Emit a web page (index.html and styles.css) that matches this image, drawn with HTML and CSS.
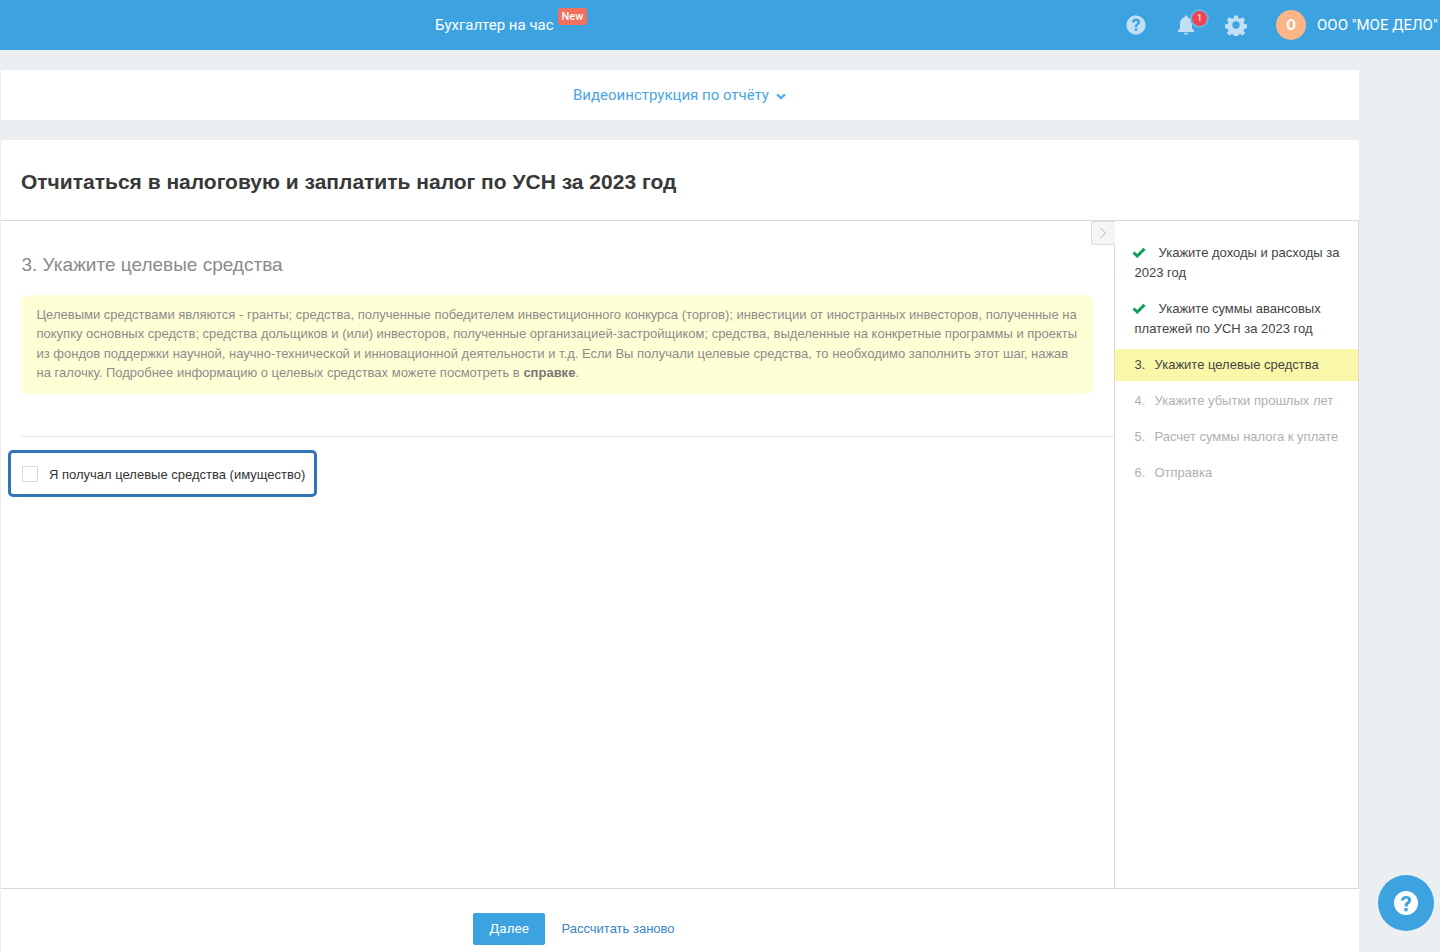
FILE: index.html
```html
<!DOCTYPE html>
<html lang="ru">
<head>
<meta charset="utf-8">
<title>Отчёт по УСН</title>
<link rel="stylesheet" href="styles.css">
</head>
<body>
<header class="topbar">
  <div class="promo">
    <span class="promo-text">Бухгалтер на час</span>
    <span class="promo-badge">New</span>
  </div>
  <div class="top-actions">
    <svg class="top-icon help-icon" viewBox="0 0 24 24"><path fill="#c1e0f6" fill-rule="evenodd" d="M12 1.500a10.500 10.500 0 1 0 0 21 10.500 10.500 0 0 0 0-21zM13.400 18.400h-2.800v-2.700h2.800zM15.900 10.600c-.4.6-1 1.100-1.500 1.500-.7.5-1 .9-1 2v.4h-2.700v-.7c0-1.500.5-2.400 1.500-3.100.9-.6 1.500-1.100 1.500-1.900 0-.8-.7-1.300-1.600-1.300-1 0-1.700.6-1.800 1.700H7.600C7.700 6.500 9.500 5 12.100 5c2.600 0 4.400 1.400 4.400 3.500 0 .8-.2 1.500-.6 2.100z"/></svg>
    <div class="bell">
      <svg class="top-icon" viewBox="0 0 24 24"><path fill="#c1e0f6" d="M12 1.500c-.9 0-1.500.7-1.500 1.500v.6C7.300 4.400 5.500 7.200 5.500 10.500v5L3 18.500V19.500h18V18.500l-2.500-3v-5c0-3.300-1.800-6.100-5-6.900V3c0-.8-.6-1.500-1.500-1.500zM9.800 20.500a2.200 2.200 0 0 0 4.400 0z"/></svg>
      <span class="bell-count">1</span>
    </div>
    <svg class="top-icon gear-icon" viewBox="0 0 24 24"><path fill="#c1e0f6" fill-rule="evenodd" d="M10 1.500h4l.6 3 1.900.8 2.600-1.700 2.800 2.800-1.700 2.600.8 1.900 3 .6v4l-3 .6-.8 1.900 1.700 2.600-2.800 2.800-2.600-1.700-1.900.8-.6 3h-4l-.6-3-1.900-.8-2.600 1.700-2.800-2.800 1.700-2.600-.8-1.900-3-.6v-4l3-.6.8-1.900-1.700-2.600 2.800-2.800 2.600 1.700 1.900-.8zM12 8a4 4 0 1 0 0 8 4 4 0 0 0 0-8z"/></svg>
    <div class="account">
      <span class="avatar">О</span>
      <span class="company">ООО "МОЕ ДЕЛО"</span>
    </div>
  </div>
</header>

<main class="page">
  <section class="video-card">
    <a class="video-link">Видеоинструкция по отчёту</a>
    <svg class="video-chevron" viewBox="0 0 10 7"><path d="M1 1.300l4 3.700 4-3.700" fill="none" stroke="#5eb3e4" stroke-width="2.500"/></svg>
  </section>

  <section class="report-card">
    <h1 class="report-title">Отчитаться в налоговую и заплатить налог по УСН за 2023 год</h1>
    <div class="report-body">
      <div class="step-content">
        <button class="collapse-toggle" type="button">
          <svg viewBox="0 0 8 12"><path d="M1.500 1l5 5-5 5" fill="none" stroke="#b4b4b4" stroke-width="1"/></svg>
        </button>
        <h2 class="step-title">3. Укажите целевые средства</h2>
        <div class="notice">Целевыми средствами являются - гранты; средства, полученные победителем инвестиционного конкурса (торгов); инвестиции от иностранных инвесторов, полученные на покупку основных средств; средства дольщиков и (или) инвесторов, полученные организацией-застройщиком; средства, выделенные на конкретные программы и проекты из фондов поддержки научной, научно-технической и инновационной деятельности и т.д. Если Вы получали целевые средства, то необходимо заполнить этот шаг, нажав на галочку. Подробнее информацию о целевых средствах можете посмотреть в <b>справке</b>.</div>
        <hr class="divider">
        <label class="check-row">
          <span class="check-box"></span>
          <span class="check-label">Я получал целевые средства (имущество)</span>
        </label>
      </div>
      <aside class="steps">
        <div class="step step-done">
          <svg class="tick" viewBox="0 0 14 11"><path d="M1.500 5.500l3.800 3.500 7.200-7.300" fill="none" stroke="#0f9d58" stroke-width="3"/></svg>Укажите доходы и расходы за 2023 год
        </div>
        <div class="step step-done">
          <svg class="tick" viewBox="0 0 14 11"><path d="M1.500 5.500l3.800 3.500 7.200-7.300" fill="none" stroke="#0f9d58" stroke-width="3"/></svg>Укажите суммы авансовых платежей по УСН за 2023 год
        </div>
        <div class="step step-current"><span class="step-num">3.</span>Укажите целевые средства</div>
        <div class="step step-next"><span class="step-num">4.</span>Укажите убытки прошлых лет</div>
        <div class="step step-next"><span class="step-num">5.</span>Расчет суммы налога к уплате</div>
        <div class="step step-next"><span class="step-num">6.</span>Отправка</div>
      </aside>
    </div>
    <footer class="report-footer">
      <button class="next-btn" type="button">Далее</button>
      <a class="recalc-link">Рассчитать заново</a>
    </footer>
  </section>
</main>

<button class="help-fab" type="button" aria-label="Помощь">
  <svg viewBox="0 0 24 24"><path fill="#fff" fill-rule="evenodd" d="M12 0a12 12 0 1 0 0 24 12 12 0 0 0 0-24zM13.600 20.200h-3.200v-3.100h3.200zM16.600 11.300c-.5.7-1.100 1.200-1.700 1.700-.9.600-1.200 1.100-1.200 2.200v.4h-3.100v-.8c0-1.700.6-2.700 1.700-3.500 1-.7 1.700-1.300 1.700-2.200 0-.9-.8-1.500-1.800-1.500-1.200 0-1.900.7-2.100 1.900H7c.1-2.900 2.200-4.600 5.100-4.600 3 0 5 1.600 5 4 0 1-.2 1.700-.5 2.400z"/></svg>
</button>
</body>
</html>
```

FILE: styles.css
```css
* { box-sizing: border-box; }
html, body { margin: 0; height: 952px; overflow: hidden; }
body { background: #ebeff2; font-family: "Liberation Sans", Arial, sans-serif; color: #333; }

.topbar { height: 50px; background: #3da3e0; display: flex; align-items: center; justify-content: space-between; padding-left: 435px; color: #fff; font-family: Roboto, sans-serif; }
.promo { display: flex; align-items: flex-start; align-self: flex-start; }
.promo-text { font-size: 15px; line-height: 18px; margin-top: 16px; }
.promo-badge { margin: 8px 0 0 4px; height: 17px; padding: 0 4px; background: #f46f5e; border-radius: 3px; font-size: 11px; font-weight: 500; line-height: 18px; }
.top-actions { display: flex; align-items: center; }
.top-icon { display: block; width: 22px; height: 22px; }
.help-icon { margin-right: 28px; margin-left: 1px; }
.bell { position: relative; width: 22px; height: 22px; margin-right: 28px; }
.bell-count { position: absolute; top: -5px; left: 15px; width: 19px; height: 19px; border-radius: 50%; background: #f04352; border: 2px solid #67b4e6; font-size: 9px; line-height: 15px; text-align: center; }
.account { display: flex; align-items: center; margin-left: 29px; }
.avatar { width: 30px; height: 30px; border-radius: 50%; background: #fcb587; font-size: 14px; font-weight: 700; line-height: 30px; text-align: center; }
.company { font-size: 15px; margin-left: 11px; white-space: nowrap; width: 123px; }

.page { width: 1358px; margin-left: 1px; padding-top: 20px; }
.video-card { height: 50px; background: #fff; display: flex; align-items: center; justify-content: center; gap: 7px; padding-right: 1px; font-family: Roboto, sans-serif; }
.video-link { font-size: 15px; color: #4ba5e2; }
.video-chevron { width: 10px; height: 7px; margin-top: 2px; }

.report-card { margin-top: 20px; height: 812px; background: #fff; display: flex; flex-direction: column; }
.report-title { margin: 0; height: 81px; padding: 0 20px; border-bottom: 1px solid #d9d9d9; font-size: 21px; font-weight: 700; line-height: 84px; color: #383838; }
.report-body { height: 667px; display: flex; border-right: 1px solid #d9d9d9; }
.step-content { position: relative; width: 1114px; border-right: 1px solid #d9d9d9; padding: 32px 0 0 20px; }
.collapse-toggle { position: absolute; top: 0; right: -1px; width: 24px; height: 24px; padding: 0; background: #f5f5f5; border: 1px solid #dcdcdc; border-right-color: #f5f5f5; border-radius: 3px 0 0 3px; display: flex; align-items: center; justify-content: center; }
.collapse-toggle svg { width: 8px; height: 12px; }
.step-title { margin: 0; padding-left: 0.500px; font-size: 19px; font-weight: 400; line-height: 24px; color: #8a8a8a; }
.notice { width: 1072px; margin-top: 18px; padding: 9.700px 15px 11.300px 15.500px; background: #ffffd6; border-radius: 8px; font-size: 13px; line-height: 19.500px; color: #8c8c8c; }
.notice b { color: #777; }
.divider { height: 1px; margin: 42px 0 0; border: 0; background: #e8ebee; }
.check-row { width: 309px; height: 47px; margin: 13px 0 0 -13px; padding: 2px 0 0 13px; display: flex; align-items: center; border: 3px solid #3374b8; border-radius: 5px; }
.check-box { width: 16px; height: 16px; margin-left: -2px; border: 1px solid #d9d9d9; }
.check-label { margin-left: 11px; font-size: 13px; white-space: nowrap; color: #333; }

.steps { width: 243px; padding-top: 16px; }
.step { padding: 6px 14px 6px 19.500px; font-size: 13px; line-height: 20px; margin-bottom: 4px; color: #444; }
.tick { width: 14px; height: 11px; margin: 0 13px 0 -3px; vertical-align: -1px; }
.step-current { background: #f8f8a8; }
.step-next { color: #b0b0b0; }
.step-num { display: inline-block; width: 20px; }

.report-footer { height: 64px; border-top: 1px solid #d9d9d9; display: flex; align-items: center; padding: 16px 0 0 472px; }
.next-btn { width: 72px; height: 32px; padding: 0 0 1px; background: #3da3e0; border: 0; border-radius: 2px; color: #fff; font-family: Roboto, sans-serif; font-size: 13.500px; font-weight: 400; }
.recalc-link { margin-left: 16.500px; font-size: 13px; color: #3a84c6; }

.help-fab { position: fixed; left: 1378px; top: 875px; width: 56px; height: 56px; padding: 16px; border: 0; border-radius: 50%; background: #3da3e0; }
.help-fab svg { display: block; width: 24px; height: 24px; }
```
